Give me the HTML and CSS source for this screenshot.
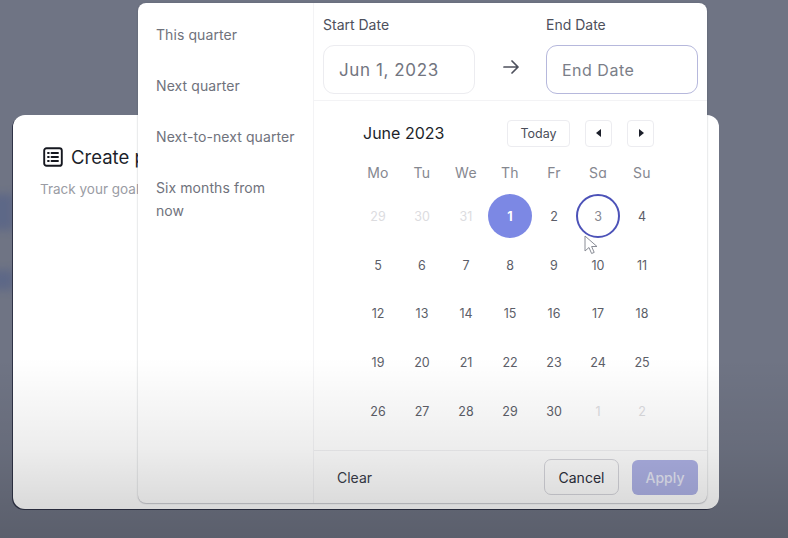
FILE: index.html
```html
<!DOCTYPE html>
<html lang="en">
<head>
<meta charset="utf-8">
<title>Date range picker</title>
<link rel="stylesheet" href="styles.css">
</head>
<body>
<div class="stage">
  <div class="blotch blotch-a"></div>
  <div class="blotch blotch-b"></div>
  <section class="card">
    <h1 class="card-title">
      <svg class="card-icon" viewBox="0 0 20 20" width="20" height="20" fill="none" stroke="#15171f" stroke-width="1.9" stroke-linecap="round">
        <rect x="1.2" y="1.2" width="17.6" height="17.6" rx="2.4"/>
        <path d="M5 6h.8M5 10h.8M5 14h.8M8.5 6H15M8.5 10H15M8.5 14H15"/>
      </svg>
      <span>Create plan</span>
    </h1>
    <p class="card-sub">Track your goals</p>
  </section>

  <div class="popup">
    <aside class="presets">
      <div class="preset">This quarter</div>
      <div class="preset">Next quarter</div>
      <div class="preset">Next-to-next quarter</div>
      <div class="preset">Six months from now</div>
    </aside>
    <div class="panel">
      <header class="range">
        <div class="field">
          <label class="field-label">Start Date</label>
          <div class="input input-value">Jun 1, 2023</div>
        </div>
        <svg class="range-arrow" viewBox="0 0 16 14" width="16" height="14" fill="none" stroke="#4d505c" stroke-width="1.7" stroke-linecap="round" stroke-linejoin="round">
          <path d="M1 7h14M9 1l6 6-6 6"/>
        </svg>
        <div class="field">
          <label class="field-label">End Date</label>
          <div class="input input-focus">End Date</div>
        </div>
      </header>
      <div class="calendar">
        <div class="cal-head">
          <div class="cal-month">June 2023</div>
          <button class="nav nav-today">Today</button>
          <button class="nav nav-arrow nav-prev"><svg viewBox="0 0 6 8" width="6" height="8"><path d="M5 0v8L0 4z" fill="#1c1f2a"/></svg></button>
          <button class="nav nav-arrow nav-next"><svg viewBox="0 0 6 8" width="6" height="8"><path d="M1 0v8l5-4z" fill="#1c1f2a"/></svg></button>
        </div>
        <div class="weekdays">
          <span>Mo</span><span>Tu</span><span>We</span><span>Th</span><span>Fr</span><span>Sa</span><span>Su</span>
        </div>
        <div class="days">
          <span class="muted">29</span><span class="muted">30</span><span class="muted">31</span><span class="selected">1</span><span>2</span><span class="hover">3</span><span>4</span>
          <span>5</span><span>6</span><span>7</span><span>8</span><span>9</span><span>10</span><span>11</span>
          <span>12</span><span>13</span><span>14</span><span>15</span><span>16</span><span>17</span><span>18</span>
          <span>19</span><span>20</span><span>21</span><span>22</span><span>23</span><span>24</span><span>25</span>
          <span>26</span><span>27</span><span>28</span><span>29</span><span>30</span><span class="muted">1</span><span class="muted">2</span>
        </div>
      </div>
      <footer class="actions">
        <button class="btn-clear">Clear</button>
        <button class="btn-cancel">Cancel</button>
        <button class="btn-apply">Apply</button>
      </footer>
    </div>
    <svg class="cursor" viewBox="0 0 14 21" width="14" height="21" fill="#fff" stroke="#8a8d96" stroke-width="1">
      <path d="M1 1v15l4-3.5 2.6 6 2.6-1.1-2.6-5.9H13z"/>
    </svg>
  </div>
  <div class="shade"></div>
</div>
</body>
</html>
```
FILE: styles.css
```css
* { box-sizing: border-box; }
html, body { margin: 0; padding: 0; }
body { font-family: Inter, "Liberation Sans", sans-serif; }

.stage {
  position: relative;
  width: 788px;
  height: 538px;
  overflow: hidden;
  padding: 115px 0 0 13px;
  background: #6f7484;
}

.blotch {
  position: absolute;
  left: -8px;
  width: 22px;
  background: #586488;
  filter: blur(4px);
  opacity: .75;
}
.blotch-a { top: 194px; height: 36px; }
.blotch-b { top: 270px; height: 20px; }

.card {
  position: relative;
  width: 706px;
  height: 394px;
  background: #fff;
  border-radius: 12px;
  padding: 30px 28px;
  box-shadow: -1px 1px 0 #2f3346;
}
.card-title {
  display: flex;
  align-items: center;
  gap: 8px;
  margin: 0;
  padding-left: 2px;
  font-size: 18.5px;
  font-weight: 400;
  line-height: 24px;
  color: #1c1f2a;
  white-space: nowrap;
}
.card-icon { flex: none; }
.card-sub {
  margin: 10px 0 0 -1px;
  font-size: 13.5px;
  line-height: 20px;
  color: #9a9ca4;
}

.popup {
  position: absolute;
  left: 138px;
  top: 3px;
  width: 569px;
  height: 500px;
  display: flex;
  background: #fff;
  border-radius: 8px;
  box-shadow: 0 0 2px rgba(60, 62, 80, .3), 0 1px 1px rgba(60, 62, 80, .2);
}
.presets {
  width: 176px;
  flex: none;
  padding: 20px 18px;
  border-right: 1px solid #f3f3f5;
}
.preset {
  margin-bottom: 28px;
  font-size: 14px;
  letter-spacing: .08px;
  line-height: 23px;
  color: #6f727c;
}

.panel {
  flex: 1;
  display: flex;
  flex-direction: column;
  min-width: 0;
}
.range {
  height: 98px;
  display: flex;
  align-items: flex-start;
  padding: 12px 9px 0 9px;
  border-bottom: 1px solid #f3f3f5;
}
.field { width: 152px; flex: none; }
.field-label {
  display: block;
  font-size: 14px;
  line-height: 20px;
  color: #4d505c;
}
.input {
  height: 49px;
  margin-top: 10px;
  padding: 0 15px;
  display: flex;
  align-items: center;
  border: 1px solid #ececf0;
  border-radius: 11px;
  font-size: 16px;
  letter-spacing: .5px;
  color: #7b7e88;
}
.input-value { font-size: 17px; letter-spacing: .6px; color: #72757f; }
.input-focus { border-color: #b6b8dc; }
.range-arrow { flex: none; margin: 45px 27px 0 28px; }

.calendar {
  flex: 1;
  padding: 18px 0 0 42px;
}
.cal-head {
  display: flex;
  align-items: center;
  height: 28px;
  padding-left: 7px;
}
.cal-month {
  width: 144px;
  font-size: 16px;
  color: #1c1f2a;
}
.nav {
  height: 27px;
  padding: 0;
  display: flex;
  align-items: center;
  justify-content: center;
  background: #fff;
  border: 1px solid #ececf0;
  border-radius: 4px;
  font-family: inherit;
  font-size: 12.5px;
  color: #4a4d58;
}
.nav-today { width: 63px; }
.nav-arrow { width: 27px; }
.nav-prev { margin-left: 15px; }
.nav-next { margin-left: 15px; }

.weekdays, .days {
  display: grid;
  grid-template-columns: repeat(7, 44px);
  justify-items: center;
  align-items: center;
}
.weekdays {
  margin-top: 9px;
  height: 32px;
  font-size: 14px;
  font-feature-settings: "cv11";
  letter-spacing: .3px;
  color: #85878f;
}
.days {
  margin-top: 4px;
  grid-auto-rows: 48.8px;
  font-size: 12.5px;
  color: #5c5e68;
}
.days span {
  width: 44px;
  height: 44px;
  display: flex;
  align-items: center;
  justify-content: center;
  border-radius: 50%;
}
.days .muted { color: #dcdcdf; }
.days .selected { background: #7c88e4; color: #fff; font-weight: 700; }
.days .hover { border: 2px solid #4c52b8; color: #85878f; }

.actions {
  height: 53px;
  flex: none;
  display: flex;
  align-items: center;
  padding: 0 9px 0 23px;
  border-top: 1px solid #f0f0f2;
}
.actions button {
  font-family: inherit;
  font-size: 14px;
  padding: 0;
}
.btn-clear {
  margin-right: auto;
  background: none;
  border: 0;
  color: #3a3d4a;
}
.btn-cancel {
  width: 75px;
  height: 36px;
  background: transparent;
  border: 1px solid #d6d6dc;
  border-radius: 7px;
  color: #2c2f3c;
}
.btn-apply {
  width: 66px;
  height: 35px;
  margin-left: 13px;
  background: #aeb2e6;
  border: 0;
  border-radius: 6px;
  font-weight: 500;
  color: #e6e8f6;
}

.cursor {
  position: absolute;
  left: 446px;
  top: 232px;
}

.shade {
  position: absolute;
  left: 0;
  right: 0;
  top: 358px;
  bottom: 0;
  pointer-events: none;
  background: linear-gradient(180deg, rgba(0,0,0,0) 0%, rgba(0,0,0,.07) 50%, rgba(0,0,0,.14) 81%, rgba(0,0,0,.18) 100%);
}
```
